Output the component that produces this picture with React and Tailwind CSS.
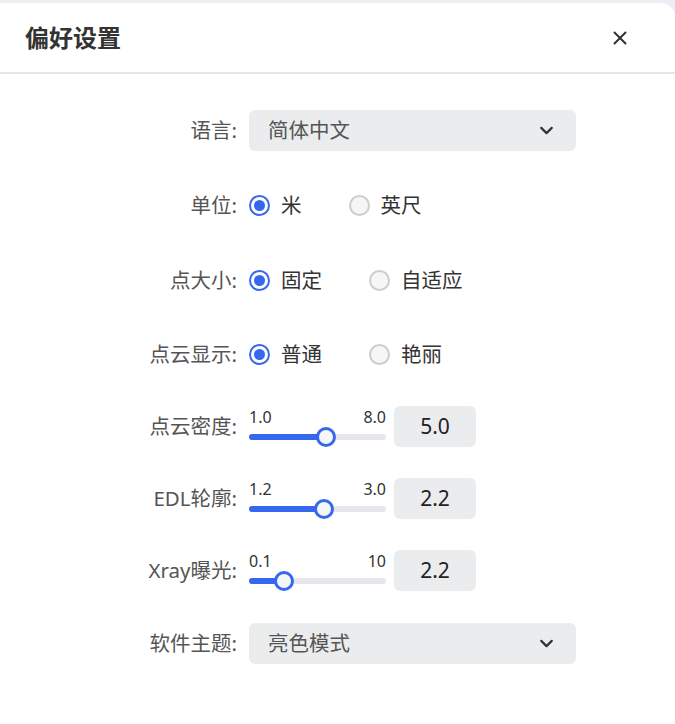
import { ChevronDown, X } from "lucide-react";

const FONT = { fontFamily: '"Noto Sans", "Noto Sans CJK SC", sans-serif' };

function Radio({ checked }) {
  return checked ? (
    <span className="w-[21px] h-[21px] rounded-full border-2 border-[#3767ef] bg-white flex items-center justify-center shrink-0">
      <span className="w-[11px] h-[11px] rounded-full bg-[#3767ef]" />
    </span>
  ) : (
    <span className="w-[21px] h-[21px] rounded-full border-2 border-[#cdcdcd] bg-[#f5f6f8] shrink-0" />
  );
}

function RadioGroup({ options, value }) {
  return (
    <div className="flex items-center">
      {options.map((opt) => (
        <label key={opt} className="flex items-center gap-[11px] mr-[47px] text-[20.5px] text-[#333]">
          <Radio checked={opt === value} />
          <span>{opt}</span>
        </label>
      ))}
    </div>
  );
}

function Select({ value }) {
  return (
    <div className="w-[327px] h-[41px] bg-[#ebecee] rounded-md flex items-center justify-between pl-[19px] pr-[19px]">
      <span className="text-[20.5px] text-[#555]">{value}</span>
      <ChevronDown className="w-[21px] h-[21px] text-[#333]" strokeWidth={2.5} />
    </div>
  );
}

function Slider({ min, max, value, minLabel, maxLabel }) {
  const frac = (value - min) / (max - min);
  const thumbLeft = frac * (137 - 20);
  return (
    <div className="flex items-end gap-2">
      <div className="w-[137px] h-[41px] flex flex-col justify-end">
        <div className="flex justify-between text-[16px] leading-[19px] text-[#333]">
          <span>{minLabel}</span>
          <span>{maxLabel}</span>
        </div>
        <div className="relative h-[20px] flex items-center">
          <div className="w-full h-[6px] rounded-full bg-[#e6e7ea]">
            <div className="h-full rounded-full bg-[#3767ef]" style={{ width: thumbLeft + 10 }} />
          </div>
          <span
            className="absolute top-0 w-[20px] h-[20px] rounded-full border-[3px] border-[#3767ef] bg-[#f5f6f8]"
            style={{ left: thumbLeft }}
          />
        </div>
      </div>
      <div className="w-[82px] h-[41px] bg-[#ebecee] rounded-md flex items-center justify-center text-[21px] text-[#222]">
        {value.toFixed(1)}
      </div>
    </div>
  );
}

function Row({ label, className, children }) {
  return (
    <div className={`flex items-center gap-3 ${className}`}>
      <div className="w-[237px] text-right text-[20.5px] text-[#555] whitespace-nowrap">{label}:</div>
      {children}
    </div>
  );
}

export default function App() {
  return (
    <div className="w-[675px] h-[724px] bg-[#eceef3] pt-[3px] overflow-hidden" style={FONT}>
      <div className="h-full bg-white rounded-tr-[14px]">
        <div className="h-[71px] flex items-center justify-between pl-[25px] pr-[44px] border-b-2 border-[#e6e6e6]">
          <h1 className="text-[24px] font-bold text-[#333]">偏好设置</h1>
          <X className="w-[22px] h-[22px] text-[#333]" strokeWidth={2.2} />
        </div>

        <div className="flex flex-col">
          <Row label="语言" className="mt-[36px] h-[41px]">
            <Select value="简体中文" />
          </Row>
          <Row label="单位" className="mt-[34px] h-[40px]">
            <RadioGroup options={["米", "英尺"]} value="米" />
          </Row>
          <Row label="点大小" className="mt-[35px] h-[40px]">
            <RadioGroup options={["固定", "自适应"]} value="固定" />
          </Row>
          <Row label="点云显示" className="mt-[34px] h-[40px]">
            <RadioGroup options={["普通", "艳丽"]} value="普通" />
          </Row>
          <Row label="点云密度" className="mt-[32px] h-[41px]">
            <Slider min={1} max={8} value={5} minLabel="1.0" maxLabel="8.0" />
          </Row>
          <Row label="EDL轮廓" className="mt-[31px] h-[41px]">
            <Slider min={1.2} max={3} value={2.2} minLabel="1.2" maxLabel="3.0" />
          </Row>
          <Row label="Xray曝光" className="mt-[31px] h-[41px]">
            <Slider min={0.1} max={10} value={2.2} minLabel="0.1" maxLabel="10" />
          </Row>
          <Row label="软件主题" className="mt-[32px] h-[41px]">
            <Select value="亮色模式" />
          </Row>
        </div>
      </div>
    </div>
  );
}
